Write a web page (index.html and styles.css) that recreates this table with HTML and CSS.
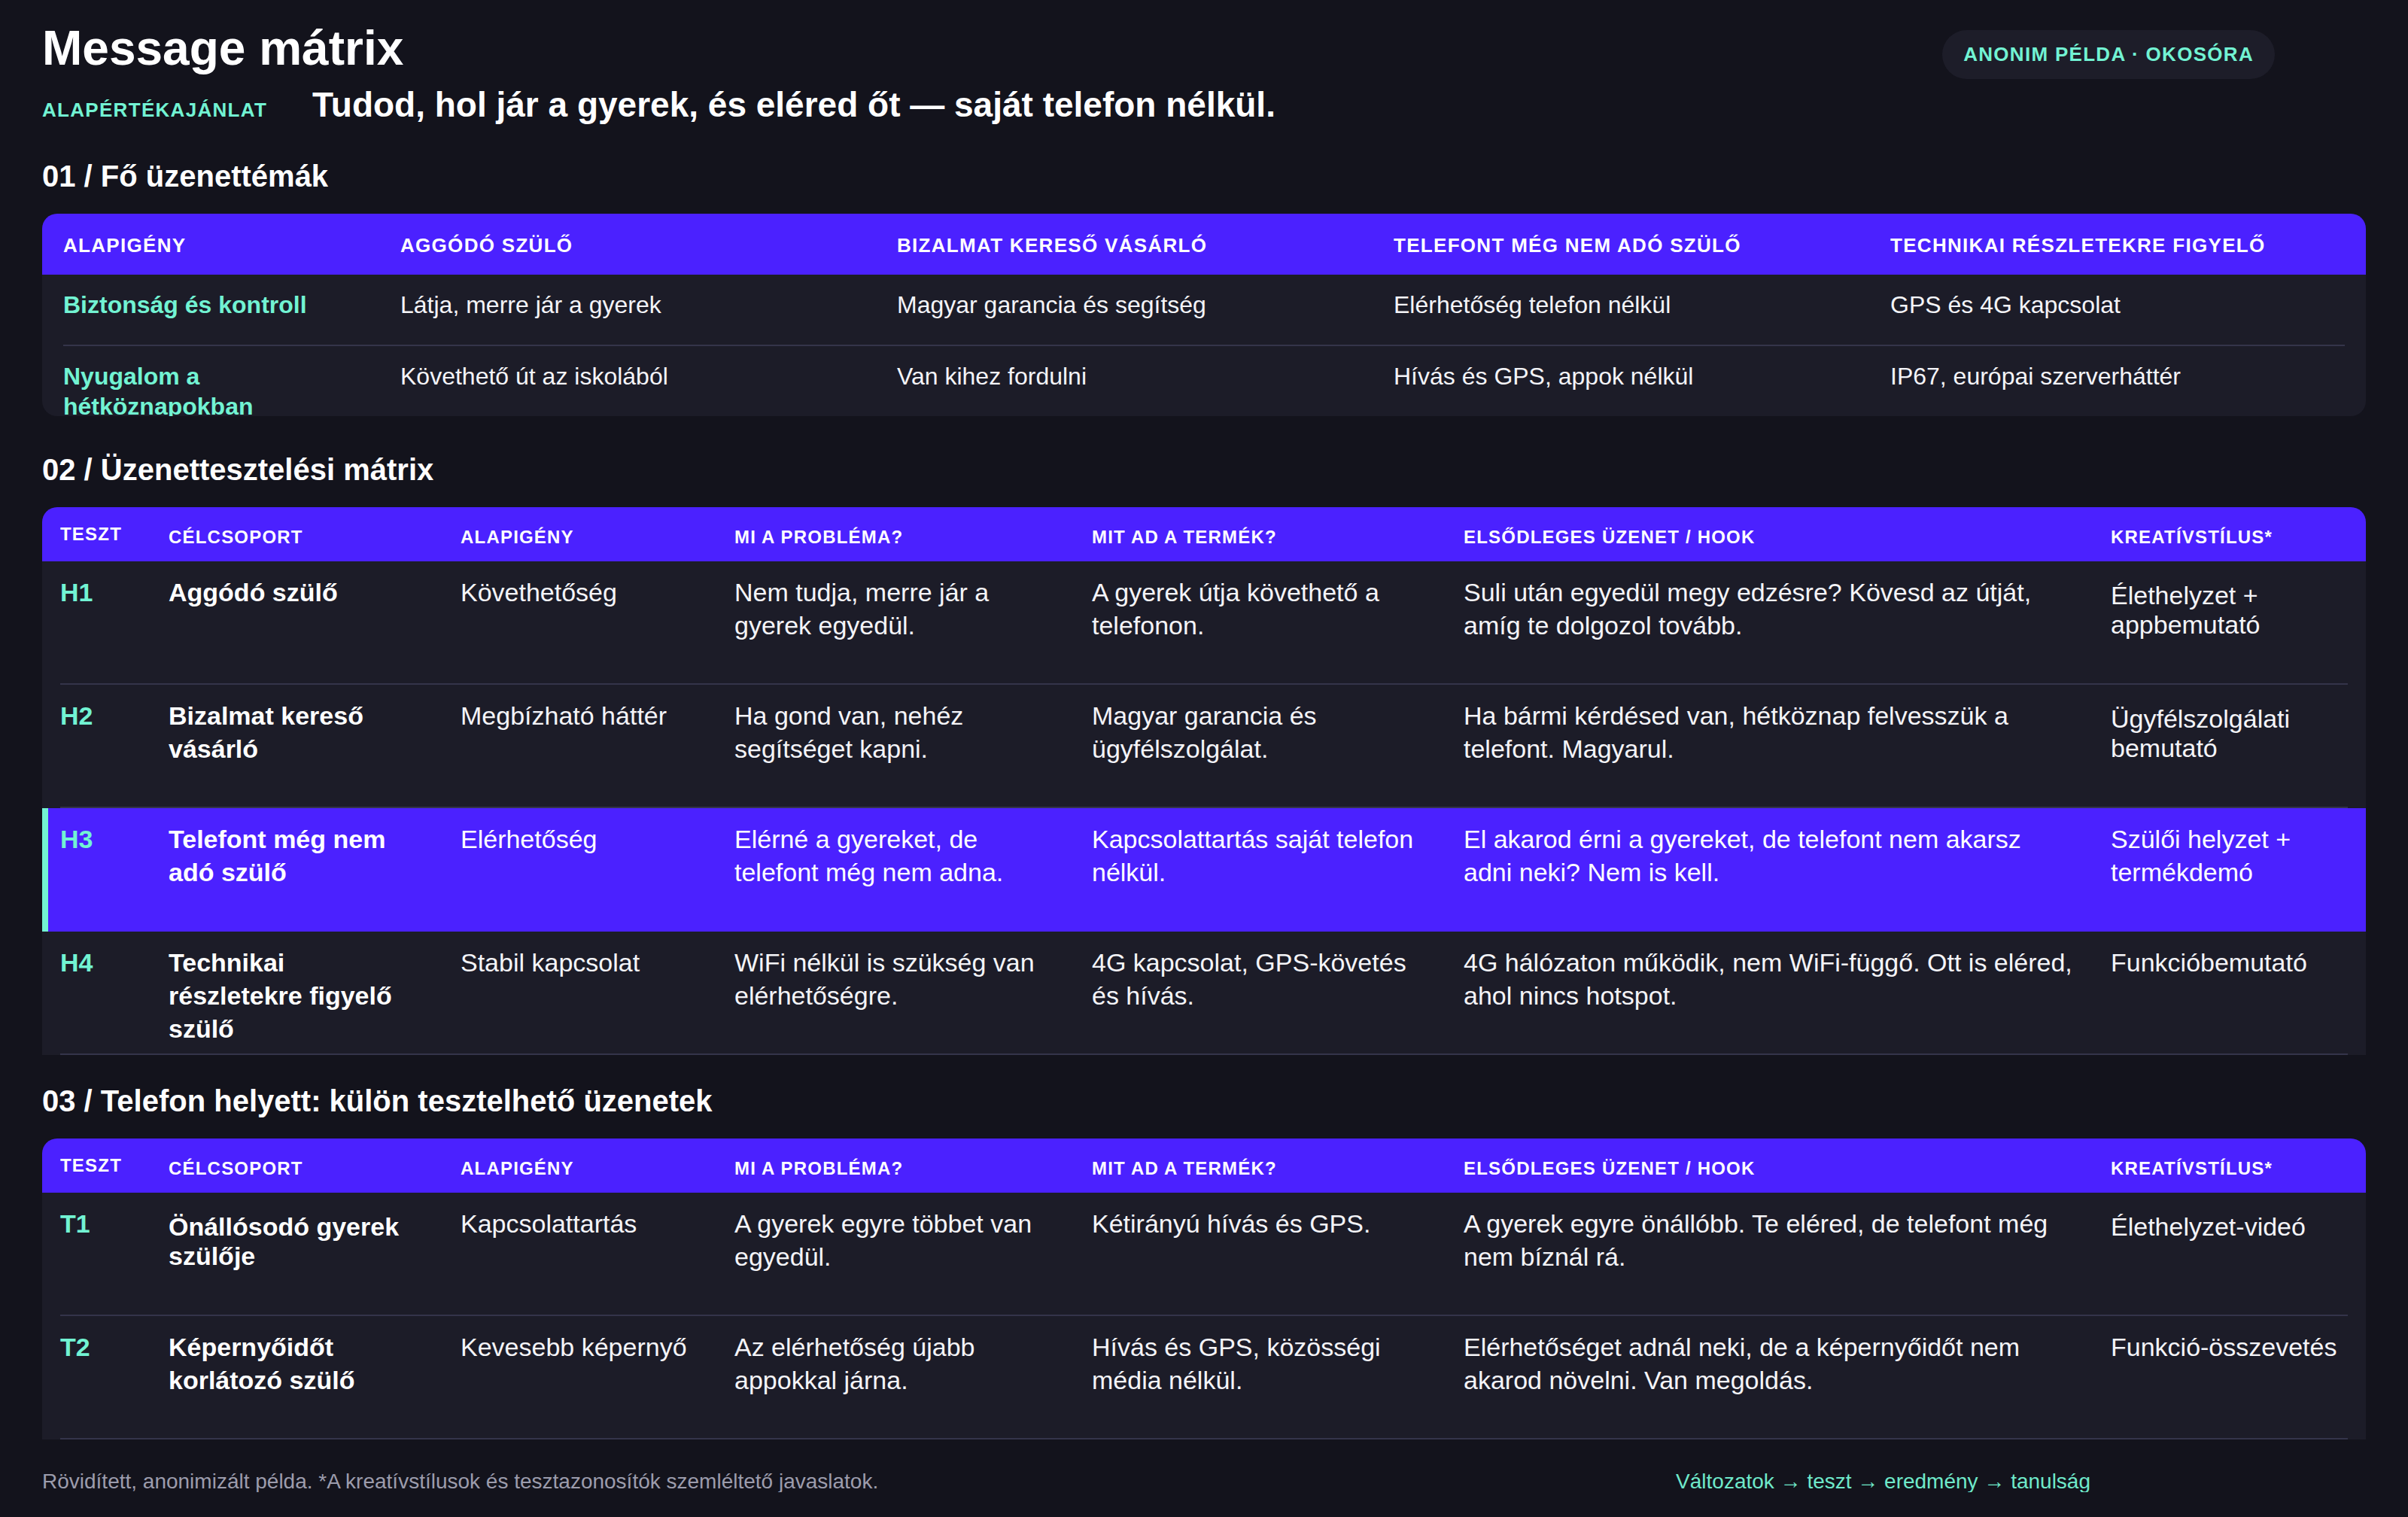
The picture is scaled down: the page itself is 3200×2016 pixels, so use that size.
FILE: index.html
```html
<!DOCTYPE html>
<html lang="hu">
<head>
<meta charset="utf-8">
<title>Message mátrix</title>
<link rel="stylesheet" href="styles.css">
</head>
<body>
<div class="page">
  <header class="top">
    <h1 class="title">Message mátrix</h1>
    <div class="pill">ANONIM PÉLDA · OKOSÓRA</div>
  </header>
  <div class="tagline">
    <span class="tag-label">ALAPÉRTÉKAJÁNLAT</span>
    <span class="tag-value">Tudod, hol jár a gyerek, és eléred őt — saját telefon nélkül.</span>
  </div>

  <section class="section s1">
    <h2 class="sec-title">01 / Fő üzenettémák</h2>
    <div class="t1">
      <div class="t1-head">
        <div>ALAPIGÉNY</div>
        <div>AGGÓDÓ SZÜLŐ</div>
        <div>BIZALMAT KERESŐ VÁSÁRLÓ</div>
        <div>TELEFONT MÉG NEM ADÓ SZÜLŐ</div>
        <div>TECHNIKAI RÉSZLETEKRE FIGYELŐ</div>
      </div>
      <div class="t1-row">
        <div class="key">Biztonság és kontroll</div>
        <div>Látja, merre jár a gyerek</div>
        <div>Magyar garancia és segítség</div>
        <div>Elérhetőség telefon nélkül</div>
        <div>GPS és 4G kapcsolat</div>
      </div>
      <div class="t1-sep"></div>
      <div class="t1-row">
        <div class="key">Nyugalom a hétköznapokban</div>
        <div>Követhető út az iskolából</div>
        <div>Van kihez fordulni</div>
        <div>Hívás és GPS, appok nélkül</div>
        <div>IP67, európai szerverháttér</div>
      </div>
    </div>
  </section>

  <section class="section s2">
    <h2 class="sec-title">02 / Üzenettesztelési mátrix</h2>
    <div class="mx">
      <div class="mx-head">
        <div class="id">TESZT</div>
        <div>CÉLCSOPORT</div>
        <div>ALAPIGÉNY</div>
        <div>MI A PROBLÉMA?</div>
        <div>MIT AD A TERMÉK?</div>
        <div>ELSŐDLEGES ÜZENET / HOOK</div>
        <div>KREATÍVSTÍLUS*</div>
      </div>
      <div class="mx-row">
        <div class="id">H1</div>
        <div class="who">Aggódó szülő</div>
        <div>Követhetőség</div>
        <div>Nem tudja, merre jár a gyerek egyedül.</div>
        <div>A gyerek útja követhető a telefonon.</div>
        <div>Suli után egyedül megy edzésre? Kövesd az útját, amíg te dolgozol tovább.</div>
        <div class="acc">Élethelyzet + appbemutató</div>
      </div>
      <div class="mx-sep"></div>
      <div class="mx-row">
        <div class="id">H2</div>
        <div class="who">Bizalmat kereső vásárló</div>
        <div>Megbízható háttér</div>
        <div>Ha gond van, nehéz segítséget kapni.</div>
        <div>Magyar garancia és ügyfélszolgálat.</div>
        <div>Ha bármi kérdésed van, hétköznap felvesszük a telefont. Magyarul.</div>
        <div class="acc">Ügyfélszolgálati bemutató</div>
      </div>
      <div class="mx-sep"></div>
      <div class="mx-row hl">
        <div class="id">H3</div>
        <div class="who">Telefont még nem adó szülő</div>
        <div>Elérhetőség</div>
        <div>Elérné a gyereket, de telefont még nem adna.</div>
        <div>Kapcsolattartás saját telefon nélkül.</div>
        <div>El akarod érni a gyereket, de telefont nem akarsz adni neki? Nem is kell.</div>
        <div>Szülői helyzet + termékdemó</div>
      </div>
      <div class="mx-row">
        <div class="id">H4</div>
        <div class="who">Technikai részletekre figyelő szülő</div>
        <div>Stabil kapcsolat</div>
        <div>WiFi nélkül is szükség van elérhetőségre.</div>
        <div>4G kapcsolat, GPS-követés és hívás.</div>
        <div>4G hálózaton működik, nem WiFi-függő. Ott is eléred, ahol nincs hotspot.</div>
        <div>Funkcióbemutató</div>
      </div>
      <div class="mx-sep"></div>
    </div>
  </section>

  <section class="section s3">
    <h2 class="sec-title">03 / Telefon helyett: külön tesztelhető üzenetek</h2>
    <div class="mx">
      <div class="mx-head">
        <div class="id">TESZT</div>
        <div>CÉLCSOPORT</div>
        <div>ALAPIGÉNY</div>
        <div>MI A PROBLÉMA?</div>
        <div>MIT AD A TERMÉK?</div>
        <div>ELSŐDLEGES ÜZENET / HOOK</div>
        <div>KREATÍVSTÍLUS*</div>
      </div>
      <div class="mx-row">
        <div class="id">T1</div>
        <div class="who acc">Önállósodó gyerek szülője</div>
        <div>Kapcsolattartás</div>
        <div>A gyerek egyre többet van egyedül.</div>
        <div>Kétirányú hívás és GPS.</div>
        <div>A gyerek egyre önállóbb. Te eléred, de telefont még nem bíznál rá.</div>
        <div class="acc">Élethelyzet-videó</div>
      </div>
      <div class="mx-sep"></div>
      <div class="mx-row">
        <div class="id">T2</div>
        <div class="who">Képernyőidőt korlátozó szülő</div>
        <div>Kevesebb képernyő</div>
        <div>Az elérhetőség újabb appokkal járna.</div>
        <div>Hívás és GPS, közösségi média nélkül.</div>
        <div>Elérhetőséget adnál neki, de a képernyőidőt nem akarod növelni. Van megoldás.</div>
        <div>Funkció-összevetés</div>
      </div>
      <div class="mx-sep"></div>
    </div>
  </section>

  <footer class="foot">
    <span class="note">Rövidített, anonimizált példa. *A kreatívstílusok és tesztazonosítók szemléltető javaslatok.</span>
    <span class="flow">Változatok → teszt → eredmény → tanulság</span>
  </footer>
</div>
</body>
</html>
```

FILE: styles.css
```css
html, body {
  margin: 0;
  background: #13131c;
}

body {
  font-family: "Liberation Sans", Arial, sans-serif;
  color: #ffffff;
}

.page {
  padding: 32px 56px 0;
}

/* top header */
.top {
  display: flex;
  justify-content: space-between;
  align-items: flex-start;
  height: 64px;
}

.title {
  margin: 0;
  font-size: 64px;
  line-height: 64px;
  font-weight: 700;
}

.pill {
  margin: 8px 121px 0 0;
  padding: 18px 28px;
  border-radius: 40px;
  background: #1d1d29;
  color: #72f3d3;
  font-size: 26px;
  line-height: 29px;
  letter-spacing: 0.05em;
  font-weight: 700;
}

.tagline {
  display: flex;
  align-items: baseline;
  gap: 60px;
  margin-top: 20px;
}

.tag-label {
  color: #72f3d3;
  font-size: 26px;
  letter-spacing: 0.05em;
  font-weight: 700;
}

.tag-value {
  font-size: 46px;
  line-height: 46px;
  font-weight: 700;
}

/* sections */
.section.s1 { margin-top: 52px; }
.section.s2 { margin-top: 51px; }
.section.s3 { margin-top: 41px; }

.sec-title {
  margin: 0 0 30px;
  font-size: 40px;
  line-height: 40px;
  font-weight: 700;
}

/* table 1 */
.t1 {
  height: 269px;
  background: #1c1c28;
  border-radius: 20px;
  overflow: hidden;
}

.t1-head,
.t1-row {
  display: grid;
  grid-template-columns: 448px 660px 660px 660px 660px;
}

.t1-head {
  height: 81px;
  align-items: center;
  background: #4b21ff;
}

.t1-head > div {
  padding: 4px 28px 0;
  font-size: 26px;
  line-height: 29px;
  letter-spacing: 0.05em;
  font-weight: 700;
}

.t1-row {
  height: 93px;
  align-items: start;
}

.t1-row > div {
  padding: 20px 28px 0;
  font-size: 32px;
  line-height: 40px;
  color: #f4f4f8;
}

.t1-row > .key {
  color: #72f3d3;
  font-weight: 700;
}

.t1-sep {
  height: 2px;
  margin: 0 28px;
  background: #34344a;
}

/* tables 2 & 3 */
.mx {
  background: #1c1c28;
  border-radius: 20px 20px 0 0;
  overflow: hidden;
}

.mx-head,
.mx-row {
  display: grid;
  grid-template-columns: 144px 388px 364px 475px 494px 860px 363px;
}

.mx-head {
  height: 72px;
  align-items: center;
  background: #4b21ff;
}

.mx-head > div {
  padding: 7px 24px 0;
  font-size: 24px;
  line-height: 28px;
  letter-spacing: 0.05em;
  font-weight: 700;
}

.mx-head > .id {
  padding-top: 0;
}

.mx-row {
  height: 162px;
  align-items: start;
}

.mx-row > div {
  padding: 19px 24px 0;
  font-size: 34px;
  line-height: 1.3;
  color: #f4f4f8;
}

.mx-row > .id {
  color: #72f3d3;
  font-weight: 700;
}

.mx-row > .who {
  color: #ffffff;
  font-weight: 700;
}

.mx-row > .acc {
  padding-top: 26px;
  line-height: 39px;
}

.mx-row.hl {
  height: 164px;
  background: #4b21ff;
  box-shadow: inset 8px 0 0 #72f3d3;
}

.mx-row.hl > div {
  color: #ffffff;
}

.mx-row.hl > .id {
  color: #72f3d3;
}

.mx-sep {
  height: 2px;
  margin: 0 24px;
  background: #34344a;
}

/* footer */
.foot {
  display: flex;
  justify-content: space-between;
  margin-top: 42px;
  padding-right: 366px;
  font-size: 28px;
  line-height: 28px;
}

.foot .note {
  color: #9c9cac;
}

.foot .flow {
  color: #6fe9ca;
}
```
